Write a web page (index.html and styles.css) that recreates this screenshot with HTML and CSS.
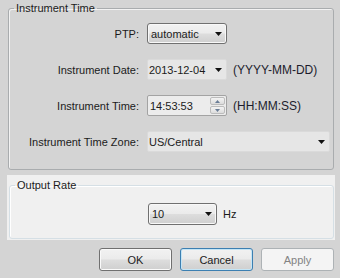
FILE: index.html
```html
<!DOCTYPE html>
<html lang="en">
<head>
    <meta charset="UTF-8">
    <title>Instrument Time</title>
    <link rel="stylesheet" href="styles.css">
</head>
<body>
    <div class="dialog">
        <fieldset class="group">
            <legend>Instrument Time</legend>
            <div class="form">
                <label class="lbl">PTP:</label>
                <div class="field">
                    <div class="combo raised w-ptp">
                        <span>automatic</span>
                        <svg class="arrow" width="7" height="4" viewBox="0 0 7 4"><path d="M0 0h7L3.5 4z"/></svg>
                    </div>
                </div>

                <label class="lbl">Instrument Date:</label>
                <div class="field">
                    <div class="combo flat w-ptp">
                        <span>2013-12-04</span>
                        <svg class="arrow" width="7" height="4" viewBox="0 0 7 4"><path d="M0 0h7L3.5 4z"/></svg>
                    </div>
                    <span class="hint">(YYYY-MM-DD)</span>
                </div>

                <label class="lbl">Instrument Time:</label>
                <div class="field">
                    <div class="spinbox w-ptp">
                        <span>14:53:53</span>
                        <div class="spin">
                            <div class="spin-btn"><svg width="5" height="3" viewBox="0 0 5 3"><path d="M0 3h5L2.5 0z"/></svg></div>
                            <div class="spin-btn"><svg width="5" height="3" viewBox="0 0 5 3"><path d="M0 0h5L2.5 3z"/></svg></div>
                        </div>
                    </div>
                    <span class="hint">(HH:MM:SS)</span>
                </div>

                <label class="lbl">Instrument Time Zone:</label>
                <div class="field">
                    <div class="combo flat w-zone">
                        <span>US/Central</span>
                        <svg class="arrow" width="7" height="4" viewBox="0 0 7 4"><path d="M0 0h7L3.5 4z"/></svg>
                    </div>
                </div>
            </div>
        </fieldset>

        <div class="band">
            <fieldset class="group light">
                <legend>Output Rate</legend>
                <div class="field rate">
                    <div class="combo raised w-rate">
                        <span>10</span>
                        <svg class="arrow" width="7" height="4" viewBox="0 0 7 4"><path d="M0 0h7L3.5 4z"/></svg>
                    </div>
                    <span>Hz</span>
                </div>
            </fieldset>
        </div>

        <div class="buttons">
            <button class="btn">OK</button>
            <button class="btn focus">Cancel</button>
            <button class="btn" disabled>Apply</button>
        </div>
    </div>
</body>
</html>
```

FILE: styles.css
```css
body {
    margin: 0;
    background: #d4d4d4;
    color: #1b1b1b;
    font-family: "Liberation Sans", Arial, sans-serif;
    font-size: 11px;
}

.dialog {
    width: 340px;
    height: 278px;
}

.group {
    margin: 1px 6px 0 8px;
    padding: 8px 3px 17px 0;
    border: 1px solid #a9acae;
    border-radius: 3px;
    box-shadow: inset 1px 1px 0 #f2f2f2;
    min-width: 0;
}

.group legend {
    margin-left: 5px;
    padding: 0 2px;
    line-height: 14px;
}

.form {
    display: grid;
    grid-template-columns: 130px 1fr;
    column-gap: 8px;
    row-gap: 15px;
    align-items: center;
}

.lbl {
    text-align: right;
}

.field {
    display: flex;
    align-items: center;
    gap: 6px;
    height: 21px;
}

.hint {
    color: #1c1c2c;
    font-size: 12px;
}

.combo,
.spinbox {
    box-sizing: border-box;
    height: 21px;
    display: flex;
    align-items: center;
    justify-content: space-between;
    padding: 0 4px 0 3px;
}

.combo.raised {
    border: 1px solid #707070;
    border-radius: 3px;
    background: linear-gradient(#f2f2f2, #ebebeb 48%, #dddddd 52%, #cfcfcf);
    box-shadow: inset 0 0 0 1px #f8f8f8;
}

.combo.flat {
    border: 1px solid #dadada;
    border-radius: 2px;
    background: #e6e6e6;
    padding-left: 1px;
}

.spinbox {
    border: 1px solid #a3a3a3;
    border-radius: 2px;
    background: #ececec;
    padding-left: 2px;
    padding-right: 1px;
}

.spin {
    display: flex;
    flex-direction: column;
    gap: 1px;
}

.spin-btn {
    box-sizing: border-box;
    width: 15px;
    height: 8px;
    border: 1px solid #bcbcbc;
    border-radius: 2px;
    background: linear-gradient(#f4f4f4, #dcdcdc);
    display: flex;
    align-items: center;
    justify-content: center;
}

.spin-btn svg {
    fill: #6a7d96;
}

.arrow {
    fill: #111;
}

.w-ptp { width: 80px; }
.w-zone { width: 183px; }
.w-rate { width: 69px; height: 22px; }

.band {
    margin: 5px 5px 0 7px;
    padding: 3px 0 1px;
    background: #f0f0f0;
}

.group.light {
    margin: 0 1px 0 2px;
    padding: 11px 0 13px 0;
    border-color: #d5dfe5;
    box-shadow: inset 1px 1px 0 #fff;
}

.field.rate {
    height: 22px;
    padding-left: 138px;
}

.buttons {
    display: flex;
    justify-content: flex-end;
    gap: 8px;
    margin-top: 8px;
    padding-right: 6px;
}

.btn {
    box-sizing: border-box;
    width: 73px;
    height: 23px;
    padding: 0;
    border: 1px solid #707070;
    border-radius: 3px;
    background: linear-gradient(#f2f2f2, #ebebeb 48%, #dddddd 52%, #cfcfcf);
    box-shadow: inset 0 0 0 1px #fafafa;
    color: #1b1b1b;
    font-family: inherit;
    font-size: 11px;
}

.btn.focus {
    border-color: #3c7fb1;
    box-shadow: inset 0 0 0 1px #c4e5f6;
}

.btn:disabled {
    border-color: #adb2b5;
    background: #f4f4f4;
    box-shadow: none;
    color: #838383;
}
```
